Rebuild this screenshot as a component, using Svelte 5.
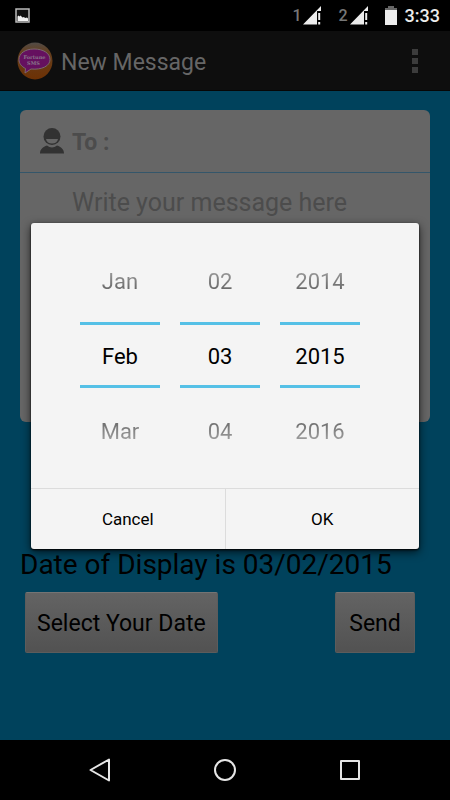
<script>
  const columns = [
    { label: 'Month', previous: 'Jan', current: 'Feb', next: 'Mar' },
    { label: 'Day', previous: '02', current: '03', next: '04' },
    { label: 'Year', previous: '2014', current: '2015', next: '2016' }
  ];
</script>

<div class="screen">
  <header class="status">
    <svg class="picture" width="16" height="16" viewBox="0 0 16 16" role="img" aria-label="Screenshot saved">
      <rect x="1" y="1" width="13" height="13" fill="#111" stroke="#bbb" stroke-width="1.5" />
      <path d="M2.500 13V8.500l1-1 1 1 1-1 2 2 1.500-.5 1 1 2-.5 1 1v2.500z" fill="#f2f2f2" />
    </svg>
    <div class="indicators">
      {#each ['1', '2'] as sim}
        <span class="sim">
          <span>{sim}</span>
          <svg width="18" height="19" viewBox="0 0 18 19" aria-hidden="true">
            <path d="M0 18.500L18 0v5h-4v13.500z" fill="#ececec" />
            <path d="M15.200 7h2v7h-2zM15.200 16h2v2.500h-2z" fill="#ececec" />
          </svg>
        </span>
      {/each}
      <svg class="battery" width="12" height="19" viewBox="0 0 12 19" aria-hidden="true">
        <path d="M3 0h6v2h3v3H0V2h3z" fill="#666" />
        <path d="M0 4h12v15H0z" fill="#ececec" />
      </svg>
      <time>3:33</time>
    </div>
  </header>

  <div class="window">
    <div class="bar">
      <svg class="logo" width="36" height="38" viewBox="0 0 36 38" role="img" aria-label="Fortune SMS">
        <defs>
          <linearGradient id="ball" x1="0" y1="0" x2="0" y2="1">
            <stop offset="0" stop-color="#514b47" />
            <stop offset="0.250" stop-color="#65401f" />
            <stop offset="1" stop-color="#6d3104" />
          </linearGradient>
        </defs>
        <ellipse cx="18" cy="19" rx="17.500" ry="18.500" fill="url(#ball)" />
        <path d="M17 7C8 7 2 11.500 2 17.500c0 4 2.500 7 6.500 9L8 31l6-4c11 1 19-3 19-9.500C33 11 26 7 17 7z" fill="#65105f" stroke="#79686f" stroke-width="1" />
        <text x="17.500" y="17" text-anchor="middle">Fortune</text>
        <text x="16.500" y="22.500" text-anchor="middle">SMS</text>
      </svg>
      <h1>New Message</h1>
      <button class="overflow" aria-label="More options">
        <span></span><span></span><span></span>
      </button>
    </div>

    <main>
      <div class="card">
        <div class="recipient">
          <svg width="24" height="26" viewBox="0 0 24 26" aria-hidden="true">
            <circle cx="12" cy="8.500" r="8.500" fill="#323232" />
            <path d="M6 11h12c-.500 3-3 4.500-6 4.500S6.500 14 6 11z" fill="#666" />
            <path d="M0 25.500c0-4.500 3-6.500 7-8 3 2.500 7 2.500 10 0 4 1.500 7 3.500 7 8z" fill="#323232" />
          </svg>
          <input type="text" placeholder="To :" aria-label="To" />
        </div>
        <textarea placeholder="Write your message here" aria-label="Message"></textarea>
      </div>
      <p>Date of Display is 03/02/2015</p>
      <div class="actions">
        <button>Select Your Date</button>
        <button>Send</button>
      </div>
    </main>

    <div class="layer">
      <div class="dialog" role="dialog" aria-label="Select date">
        <div class="pickers">
          {#each columns as column}
            <div class="picker">
              <button class="before">{column.previous}</button>
              <input type="text" value={column.current} aria-label={column.label} />
              <button class="after">{column.next}</button>
            </div>
          {/each}
        </div>
        <div class="choices">
          <button>Cancel</button>
          <button>OK</button>
        </div>
      </div>
    </div>
  </div>

  <nav>
    <button aria-label="Back">
      <svg width="24" height="26" viewBox="0 0 24 26"><path d="M21 2.500v21L2.500 13z" /></svg>
    </button>
    <button aria-label="Home">
      <svg width="24" height="26" viewBox="0 0 24 26"><circle cx="12" cy="13" r="10" /></svg>
    </button>
    <button aria-label="Recent apps">
      <svg width="24" height="26" viewBox="0 0 24 26"><rect x="3" y="4" width="18" height="18" /></svg>
    </button>
  </nav>
</div>

<style>
  :global(body) {
    margin: 0;
    background: #000;
  }
  .screen {
    display: flex;
    flex-direction: column;
    min-height: 100vh;
    font-family: Roboto, sans-serif;
    color: #000;
  }
  button,
  input,
  textarea {
    box-sizing: border-box;
    margin: 0;
    padding: 0;
    border: 0;
    border-radius: 0;
    background: none;
    font-family: inherit;
    color: inherit;
    outline: none;
  }
  svg {
    display: block;
    flex: none;
  }
  .status {
    display: flex;
    align-items: center;
    justify-content: space-between;
    height: 31px;
    padding: 0 10px 0 15px;
    background: #000;
  }
  .indicators {
    display: flex;
    align-items: center;
  }
  .sim {
    display: flex;
    align-items: center;
    gap: 2px;
    margin-right: 17px;
    font-size: 16px;
    font-weight: 500;
    color: #777;
  }
  .battery {
    margin-right: 8px;
  }
  time {
    font-size: 18px;
    font-weight: 500;
    color: #ececec;
  }
  .window {
    position: relative;
    display: flex;
    flex: 1;
    flex-direction: column;
    background: #00425c;
  }
  .bar {
    display: flex;
    align-items: center;
    box-sizing: border-box;
    height: 60px;
    padding: 0 17px;
    border-bottom: 1px solid #060606;
    background: #0e0e0e;
  }
  .logo text {
    font-family: "DejaVu Serif", serif;
    font-size: 5px;
    font-weight: 700;
    fill: #88758a;
  }
  h1 {
    flex: 1;
    margin: 0 0 0 8px;
    padding-top: 4px;
    font-size: 23px;
    font-weight: 400;
    color: #666;
  }
  .overflow {
    display: flex;
    flex-direction: column;
    align-items: center;
    gap: 3px;
    width: 36px;
  }
  .overflow span {
    width: 6px;
    height: 6px;
    background: #3c3c3c;
  }
  main {
    padding: 19px 20px;
  }
  .card {
    overflow: hidden;
    border-radius: 6px;
    background: #666;
  }
  .recipient {
    display: flex;
    align-items: center;
    gap: 8px;
    height: 62px;
    padding-left: 20px;
    border-bottom: 1px solid #34566a;
  }
  .recipient input {
    flex: 1;
    min-width: 0;
    height: 60px;
    padding-top: 2px;
    font-size: 23px;
    font-weight: 700;
  }
  textarea {
    display: block;
    width: 100%;
    height: 249px;
    padding: 14px 20px 0 52px;
    resize: none;
    font-size: 25px;
    line-height: 32px;
  }
  ::placeholder {
    color: #4c4c4c;
    opacity: 1;
  }
  p {
    margin: 126px 0 0;
    font-size: 28px;
    line-height: 34px;
  }
  .actions {
    display: flex;
    justify-content: space-between;
    padding: 10px 15px 0 5px;
  }
  .actions button {
    height: 61px;
    padding: 2px 11px 0;
    border: 1px solid #5c5c5c;
    border-top-color: #747474;
    border-radius: 2px;
    background: linear-gradient(#636363, #525252);
    font-size: 23px;
  }
  .actions button:last-child {
    min-width: 80px;
  }
  .layer {
    position: absolute;
    inset: 0;
    display: flex;
    align-items: center;
    justify-content: center;
    padding: 0 31px;
  }
  .dialog {
    flex: 1;
    max-width: 560px;
    border-radius: 3px;
    background: #f4f4f4;
    box-shadow: 0 1px 2px #000, 0 3px 10px rgba(0, 0, 0, 0.7);
  }
  .pickers {
    display: flex;
    justify-content: center;
    gap: 20px;
    padding: 15px 10px 16px 0;
  }
  .picker {
    display: flex;
    flex-direction: column;
    width: 80px;
  }
  .picker button,
  .picker input {
    width: 100%;
    height: 84px;
    padding-top: 3px;
    font-size: 22px;
    text-align: center;
  }
  .picker input {
    height: 66px;
    border-top: 3px solid #55c0e6;
    border-bottom: 3px solid #55c0e6;
  }
  .before,
  .after {
    color: transparent;
    background-clip: text;
  }
  .before {
    background-image: linear-gradient(#f4f4f4, #111);
  }
  .after {
    background-image: linear-gradient(#111, #f4f4f4);
  }
  .choices {
    display: flex;
    border-top: 1px solid #dcdcdc;
  }
  .choices button {
    flex: 1;
    height: 60px;
    font-size: 17px;
  }
  .choices button + button {
    border-left: 1px solid #dcdcdc;
  }
  nav {
    display: flex;
    justify-content: center;
    height: 60px;
    background: #000;
  }
  nav button {
    display: flex;
    flex: 0 1 125px;
    align-items: center;
    justify-content: center;
  }
  nav svg {
    fill: none;
    stroke: #e6e6e6;
    stroke-width: 2;
    stroke-linejoin: round;
  }
</style>
